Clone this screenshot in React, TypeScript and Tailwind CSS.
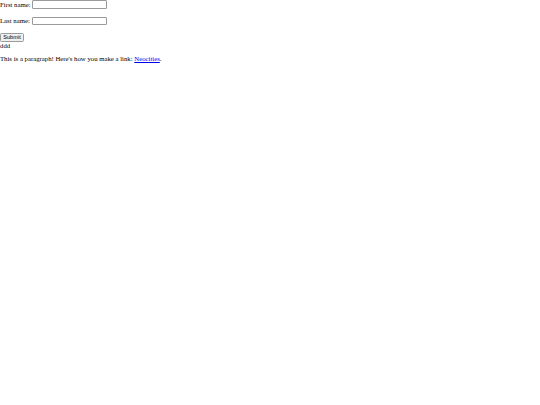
import React from 'react';

const App: React.FC = () => {
  return (
    <div className="w-[540px] h-[405px] bg-white text-black font-['Liberation_Serif',serif] text-[6.75px] leading-[7.8px]">
      <form className="flex flex-col">
        <div className="flex items-center h-[9px]">
          <span>First name:</span>
          <input type="text" className="ml-[1.7px] w-[75px] h-[8.5px] border-[0.5px] border-[#9a9a9a] rounded-[1px] bg-white" />
        </div>
        <div className="h-[7.6px]" />
        <div className="flex items-center h-[9px]">
          <span>Last name:</span>
          <input type="text" className="ml-[1.7px] w-[75px] h-[8.5px] border-[0.5px] border-[#9a9a9a] rounded-[1px] bg-white" />
        </div>
        <div className="h-[7.6px]" />
        <div className="flex h-[9px] items-center">
          <button type="button" className="w-[24px] h-[8.5px] border-[0.5px] border-[#9a9a9a] rounded-[1.5px] bg-[#efefef] text-[5.6px] leading-none font-['Liberation_Sans',sans-serif] flex items-center justify-center">
            Submit
          </button>
        </div>
        <div>ddd</div>
      </form>
      <p className="mt-[5px]">
        This is a paragraph! Here's how you make a link:{' '}
        <a href="#" className="text-[#0000ee] underline">Neocities</a>.
      </p>
    </div>
  );
};

export default App;
